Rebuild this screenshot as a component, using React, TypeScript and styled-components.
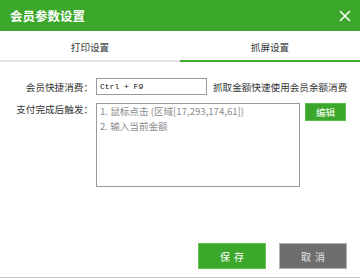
import React from "react";
import styled, { createGlobalStyle } from "styled-components";

const GREEN = "#3ca82b";

const Global = createGlobalStyle`
  html, body { margin: 0; padding: 0; background: #ffffff; }
  body { font-family: "Noto Sans CJK SC", "Noto Sans", sans-serif; }
  * { box-sizing: border-box; }
`;

const Window = styled.div`
  width: 360px;
  height: 278px;
  display: flex;
  flex-direction: column;
  background: #ffffff;
  border-bottom: 1px solid #c9c9c9;
  color: #333333;
`;

const TitleBar = styled.div`
  height: 31px;
  flex: none;
  background: ${GREEN};
  display: flex;
  align-items: center;
  justify-content: space-between;
  padding: 0 9px 0 10px;
`;

const Title = styled.div`
  color: #ffffff;
  font-size: 12.5px;
  font-weight: 700;
  line-height: 14px;
`;

const CloseButton = styled.div`
  width: 12px;
  height: 12px;
  display: flex;
  margin-top: 1px;
`;

const Tabs = styled.div`
  display: flex;
  height: 31px;
  flex: none;
`;

const Tab = styled.div<{ $active?: boolean }>`
  flex: 1;
  display: flex;
  align-items: center;
  justify-content: center;
  padding-top: 3px;
  font-size: 9.6px;
  line-height: 12px;
  color: #333333;
  border-bottom: 2px solid ${(p) => (p.$active ? "#42ad31" : "#e2e2e2")};
`;

const Form = styled.div`
  display: flex;
  flex-direction: column;
  gap: 8px;
  padding-top: 16px;
`;

const Row = styled.div<{ $top?: boolean }>`
  display: flex;
  align-items: ${(p) => (p.$top ? "flex-start" : "center")};
`;

const Label = styled.div`
  width: 93px;
  flex: none;
  text-align: right;
  font-size: 9.6px;
  line-height: 12px;
  color: #333333;
  padding-top: ${(p: { $pad?: number }) => p.$pad ?? 0}px;
`;

const KeyInput = styled.div`
  width: 111px;
  height: 17px;
  margin-left: 3px;
  border: 1px solid #9a9a9a;
  display: flex;
  align-items: center;
  padding-left: 3px;
  font-family: "Liberation Mono", "DejaVu Sans Mono", monospace;
  font-size: 8px;
  color: #111111;
`;

const Hint = styled.div`
  margin-left: 6px;
  font-size: 9.6px;
  line-height: 12px;
  color: #333333;
  white-space: nowrap;
`;

const ActionBox = styled.div`
  width: 204px;
  height: 84px;
  margin-left: 3px;
  border: 1px solid #9a9a9a;
  padding: 0 3px;
  font-size: 9.6px;
  line-height: 15px;
  color: #8a8a8a;
  white-space: nowrap;
  overflow: hidden;
`;

const SmallButton = styled.div`
  width: 41px;
  height: 18px;
  margin-left: 5px;
  background: ${GREEN};
  border: 1px solid #5bbd4b;
  color: #ffffff;
  font-size: 9.6px;
  display: flex;
  align-items: center;
  justify-content: center;
`;

const Footer = styled.div`
  margin-top: auto;
  display: flex;
  justify-content: flex-end;
  gap: 13px;
  padding: 0 13px 8px 0;
`;

const FooterButton = styled.div<{ $kind: "primary" | "secondary" }>`
  width: 68px;
  height: 26px;
  display: flex;
  align-items: center;
  justify-content: center;
  font-size: 10px;
  letter-spacing: 4px;
  text-indent: 4px;
  background: ${(p) => (p.$kind === "primary" ? GREEN : "#6e6e6e")};
  border: 1px solid ${(p) => (p.$kind === "primary" ? "#67c257" : "#b3b3b3")};
  color: ${(p) => (p.$kind === "primary" ? "#ffffff" : "#e4e4e4")};
`;

export default function App() {
  return (
    <>
      <Global />
      <Window>
        <TitleBar>
          <Title>会员参数设置</Title>
          <CloseButton>
            <svg width="12" height="12" viewBox="0 0 12 12">
              <path d="M1 1 L11 11 M11 1 L1 11" stroke="#ffffff" strokeWidth="1.5" fill="none" />
            </svg>
          </CloseButton>
        </TitleBar>
        <Tabs>
          <Tab>打印设置</Tab>
          <Tab $active>抓屏设置</Tab>
        </Tabs>
        <Form>
          <Row>
            <Label>会员快捷消费：</Label>
            <KeyInput>Ctrl + F9</KeyInput>
            <Hint>抓取金额快速使用会员余额消费</Hint>
          </Row>
          <Row $top>
            <Label $pad={0}>支付完成后触发：</Label>
            <ActionBox>
              <div>1. 鼠标点击 (区域[17,293,174,61])</div>
              <div>2. 输入当前金额</div>
            </ActionBox>
            <SmallButton>编辑</SmallButton>
          </Row>
        </Form>
        <Footer>
          <FooterButton $kind="primary">保存</FooterButton>
          <FooterButton $kind="secondary">取消</FooterButton>
        </Footer>
      </Window>
    </>
  );
}
